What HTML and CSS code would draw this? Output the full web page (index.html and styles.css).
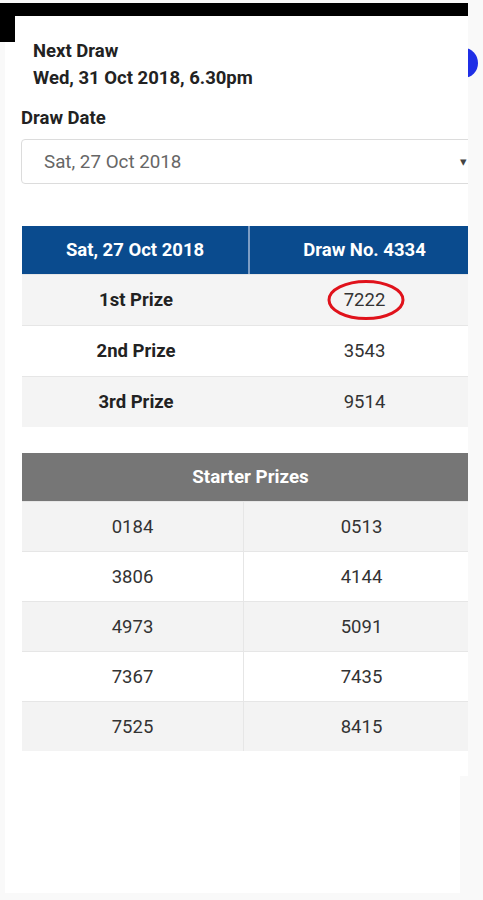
FILE: index.html
```html
<!DOCTYPE html>
<html>
<head>
<meta charset="utf-8">
<link rel="stylesheet" href="styles.css">
</head>
<body>
<div class="page">
  <div class="topbar"></div>
  <div class="sheet"></div>
  <div class="fab"></div>
</div>
<div class="modal">
  <div class="next">
    <div class="next-title">Next Draw</div>
    <div class="next-date">Wed, 31 Oct 2018, 6.30pm</div>
  </div>
  <div class="label">Draw Date</div>
  <div class="select">
    <span class="select-text">Sat, 27 Oct 2018</span>
    <span class="caret">▾</span>
  </div>
  <div class="results">
    <div class="row head-blue">
      <div class="c1">Sat, 27 Oct 2018</div>
      <div class="c2">Draw No. 4334</div>
    </div>
    <div class="row alt">
      <div class="c1 bold">1st Prize</div>
      <div class="c2 num circled">7222
        <svg class="ring" viewBox="0 0 80 42" width="80" height="42"><ellipse cx="40" cy="21" rx="37" ry="18.5" fill="none" stroke="#e0121b" stroke-width="3"/></svg>
      </div>
    </div>
    <div class="row">
      <div class="c1 bold">2nd Prize</div>
      <div class="c2 num">3543</div>
    </div>
    <div class="row alt">
      <div class="c1 bold">3rd Prize</div>
      <div class="c2 num">9514</div>
    </div>
  </div>
  <div class="starter">
    <div class="head-gray">Starter Prizes</div>
    <div class="srow alt"><div class="s1">0184</div><div class="s2">0513</div></div>
    <div class="srow"><div class="s1">3806</div><div class="s2">4144</div></div>
    <div class="srow alt"><div class="s1">4973</div><div class="s2">5091</div></div>
    <div class="srow"><div class="s1">7367</div><div class="s2">7435</div></div>
    <div class="srow alt"><div class="s1">7525</div><div class="s2">8415</div></div>
  </div>
</div>
</body>
</html>
```
FILE: styles.css
```css
* { box-sizing: border-box; }
html, body { margin: 0; padding: 0; }
body {
  background: #f9f9f9;
  font-family: Roboto, "Liberation Sans", sans-serif;
  color: #222;
  width: 483px;
  height: 900px;
  overflow: hidden;
  position: relative;
}
.page { padding-top: 3px; }
.topbar { height: 39px; width: 468px; background: #000; }
.sheet { margin-left: 5px; width: 455px; height: 851px; background: #fff; }
.fab {
  position: absolute; left: 450px; top: 48px;
  width: 28px; height: 30px; border-radius: 50%;
  background: #1f2fe6;
}
.modal {
  position: absolute; left: 15px; top: 16px;
  width: 453px; height: 760px;
  background: #fff;
  overflow: hidden;
  padding: 22px 0 0 6px;
}
.next { padding-left: 12px; }
.next-title, .next-date { font-size: 18.5px; font-weight: 700; line-height: 27px; color: #222; }
.label { margin-top: 13px; font-size: 18.5px; font-weight: 700; line-height: 27px; color: #222; }
.select {
  margin-top: 7px;
  width: 470px; height: 45px;
  border: 1px solid #dcdcdc; border-radius: 4px;
  display: flex; align-items: center;
  padding-left: 22px;
  position: relative;
}
.select-text { font-size: 18.8px; color: #666; }
.caret { position: absolute; left: 438px; font-size: 13px; color: #444; }
.results { margin-top: 42px; margin-left: 1px; width: 457px; }
.row { display: flex; height: 51px; border-top: 1px solid #e6e6e6; }
.row > div { display: flex; align-items: center; justify-content: center; }
.row .c1 { width: 228px; }
.row .c2 { flex: 1; }
.row.alt { background: #f4f4f4; }
.head-blue { background: #0a4b8e; height: 48px; border-top: none; }
.head-blue > div { color: #fff; font-weight: 700; font-size: 18.5px; }
.head-blue .c1 { border-right: 2px solid #7d9dc4; }
.bold { font-weight: 700; font-size: 18.5px; color: #222; }
.num { font-size: 18.5px; color: #333; }
.circled { position: relative; }
.ring { position: absolute; left: 76px; top: 4px; }
.starter { margin-top: 26px; margin-left: 1px; width: 457px; }
.head-gray {
  background: #767676; color: #fff; height: 48px;
  display: flex; align-items: center; justify-content: center;
  font-weight: 700; font-size: 18.8px;
}
.srow { display: flex; height: 50px; border-top: 1px solid #e6e6e6; }
.srow > div { display: flex; align-items: center; justify-content: center; font-size: 18.5px; color: #333; }
.srow .s1 { width: 222px; border-right: 1px solid #e6e6e6; }
.srow .s2 { flex: 1; }
.srow.alt { background: #f3f3f3; }
.srow:first-of-type { border-top: none; }
```
